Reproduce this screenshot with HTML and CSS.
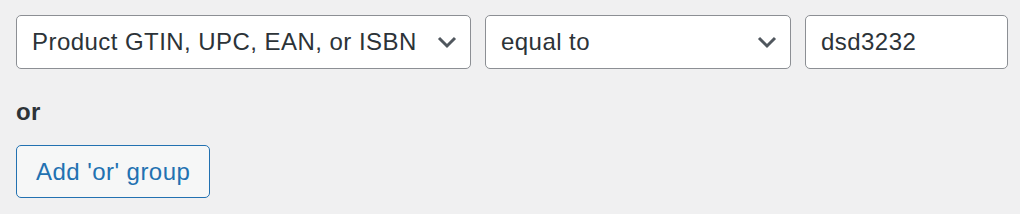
FILE: index.html
```html
<!DOCTYPE html>
<html lang="en">
<head>
    <meta charset="UTF-8">
    <title>Condition group</title>
    <link rel="stylesheet" href="styles.css">
</head>
<body>
    <div class="rule-row">
        <div class="select field-name">
            <span>Product GTIN, UPC, EAN, or ISBN</span>
            <svg class="chevron" viewBox="0 0 20 20" width="20" height="20"><path d="M2 6 L10 14 L18 6" fill="none" stroke="#50575e" stroke-width="3"/></svg>
        </div>
        <div class="select field-op">
            <span>equal to</span>
            <svg class="chevron" viewBox="0 0 20 20" width="20" height="20"><path d="M2 6 L10 14 L18 6" fill="none" stroke="#50575e" stroke-width="3"/></svg>
        </div>
        <div class="text-input">dsd3232</div>
    </div>

    <div class="or-label">or</div>

    <button class="add-group">Add 'or' group</button>
</body>
</html>
```

FILE: styles.css
```css
body {
    margin: 0;
    padding: 15px 16px;
    background-color: #f0f0f1;
    font-family: "Liberation Sans", Arial, sans-serif;
    font-size: 24px;
    letter-spacing: 0.45px;
    color: #2c3338;
}
.rule-row {
    display: flex;
    gap: 14px;
}
.select,
.text-input {
    box-sizing: border-box;
    flex-shrink: 0;
    height: 54px;
    border: 1px solid #8c8f94;
    border-radius: 5px;
    background-color: #fff;
    padding: 0 15px;
    display: flex;
    align-items: center;
}
.select {
    justify-content: space-between;
    padding-right: 13px;
}
.chevron {
    flex-shrink: 0;
}
.field-name {
    width: 455px;
}
.field-op {
    width: 306px;
}
.text-input {
    width: 203px;
}
.or-label {
    font-weight: bold;
    margin-top: 30px;
    line-height: 26px;
}
.add-group {
    box-sizing: border-box;
    margin-top: 20px;
    height: 53px;
    padding: 0 19px;
    border: 1px solid #2271b1;
    border-radius: 5px;
    background-color: #f6f7f7;
    color: #2271b1;
    font-family: inherit;
    font-size: 24px;
    letter-spacing: 0.45px;
}
```
